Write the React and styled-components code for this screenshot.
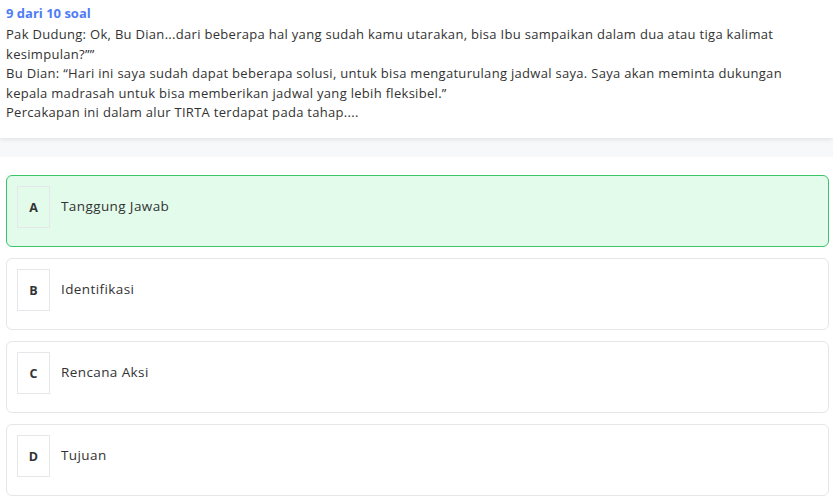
import React from "react";
import styled, { createGlobalStyle } from "styled-components";

const Global = createGlobalStyle`
  html, body { margin: 0; padding: 0; background: #ffffff; }
  body { font-family: "Open Sans", "Noto Sans", sans-serif; }
  * { box-sizing: border-box; }
`;

const Page = styled.div`
  width: 833px;
  min-height: 500px;
  display: flex;
  flex-direction: column;
`;

const Header = styled.header`
  background: #fff;
  padding: 4px 6px 0 6px;
  height: 138px;
  box-shadow: 0 2px 4px rgba(0, 0, 0, 0.08);
  position: relative;
  z-index: 1;
`;

const Counter = styled.div`
  color: #4f7cf4;
  font-weight: 700;
  font-size: 13px;
  line-height: 19px;
  margin-bottom: 2px;
`;

const Question = styled.div`
  color: #333;
  font-size: 13px;
  line-height: 19.5px;
  letter-spacing: 0.3px;
  width: 821px;
`;

const Band = styled.div`
  height: 19px;
  background: #f7f8fa;
`;

const Options = styled.div`
  display: flex;
  flex-direction: column;
  gap: 11px;
  padding: 18px 4px 0 6px;
`;

const Option = styled.div`
  height: 72px;
  border-radius: 6px;
  border: 1px solid ${(p) => (p.$selected ? "#3cc46b" : "#e6e6e6")};
  background: ${(p) => (p.$selected ? "#e2fbea" : "#fff")};
  display: flex;
  align-items: flex-start;
  padding: 10px 10px;
`;

const Letter = styled.div`
  width: 33px;
  height: 42px;
  border: 1px solid #e5e7eb;
  display: flex;
  align-items: center;
  justify-content: center;
  font-weight: 700;
  font-size: 12.5px;
  color: #333;
  flex-shrink: 0;
`;

const Label = styled.div`
  margin-left: 11px;
  height: 42px;
  display: flex;
  align-items: center;
  font-size: 13.5px;
  letter-spacing: 0.4px;
  color: #333;
  padding-bottom: 3px;
`;

const options = [
  { key: "A", text: "Tanggung Jawab", selected: true },
  { key: "B", text: "Identifikasi" },
  { key: "C", text: "Rencana Aksi" },
  { key: "D", text: "Tujuan" },
];

export default function App() {
  return (
    <Page>
      <Global />
      <Header>
        <Counter>9 dari 10 soal</Counter>
        <Question>
          Pak Dudung: Ok, Bu Dian...dari beberapa hal yang sudah kamu utarakan, bisa Ibu sampaikan dalam dua atau tiga kalimat kesimpulan?””
          <br />
          Bu Dian: “Hari ini saya sudah dapat beberapa solusi, untuk bisa mengaturulang jadwal saya. Saya akan meminta dukungan kepala madrasah untuk bisa memberikan jadwal yang lebih fleksibel.”
          <br />
          Percakapan ini dalam alur TIRTA terdapat pada tahap....
        </Question>
      </Header>
      <Band />
      <Options>
        {options.map((o) => (
          <Option key={o.key} $selected={o.selected}>
            <Letter>{o.key}</Letter>
            <Label>{o.text}</Label>
          </Option>
        ))}
      </Options>
    </Page>
  );
}
